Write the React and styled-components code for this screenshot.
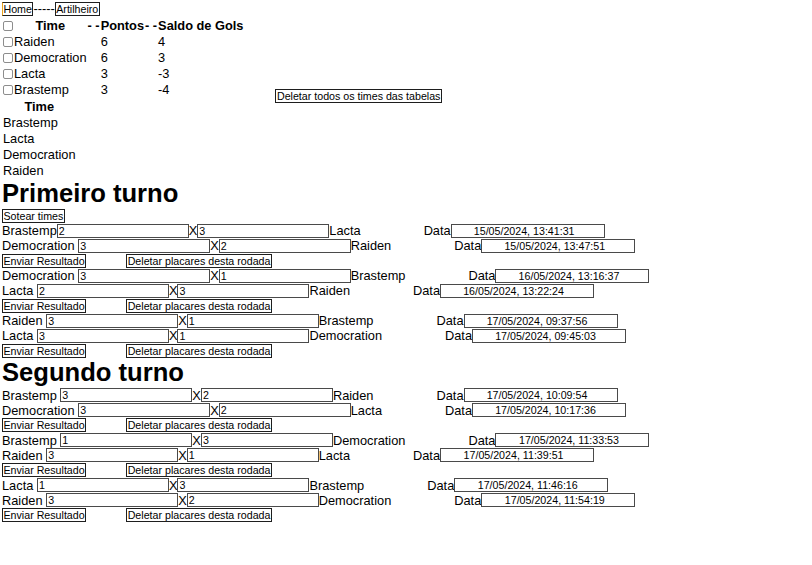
import React from 'react'
import styled, { createGlobalStyle } from 'styled-components'

const GlobalStyle = createGlobalStyle`
  body {
    margin: 0;
    padding: 2px 2px 0 2px;
    background: #fff;
    color: #000;
    font-family: "Liberation Sans", Arial, sans-serif;
    font-size: 12.8px;
  }
`

const standings = [
  { team: 'Raiden', pontos: 6, saldo: 4 },
  { team: 'Democration', pontos: 6, saldo: 3 },
  { team: 'Lacta', pontos: 3, saldo: -3 },
  { team: 'Brastemp', pontos: 3, saldo: -4 },
]

const teams = ['Brastemp', 'Lacta', 'Democration', 'Raiden']

const turnos = [
  {
    title: 'Primeiro turno',
    sortear: true,
    rodadas: [
      [
        { home: 'Brastemp', hs: '2', away: 'Lacta', as: '3', date: '15/05/2024, 13:41:31', tight: true },
        { home: 'Democration', hs: '3', away: 'Raiden', as: '2', date: '15/05/2024, 13:47:51' },
      ],
      [
        { home: 'Democration', hs: '3', away: 'Brastemp', as: '1', date: '16/05/2024, 13:16:37' },
        { home: 'Lacta', hs: '2', away: 'Raiden', as: '3', date: '16/05/2024, 13:22:24' },
      ],
      [
        { home: 'Raiden', hs: '3', away: 'Brastemp', as: '1', date: '17/05/2024, 09:37:56' },
        { home: 'Lacta', hs: '3', away: 'Democration', as: '1', date: '17/05/2024, 09:45:03' },
      ],
    ],
  },
  {
    title: 'Segundo turno',
    sortear: false,
    rodadas: [
      [
        { home: 'Brastemp', hs: '3', away: 'Raiden', as: '2', date: '17/05/2024, 10:09:54' },
        { home: 'Democration', hs: '3', away: 'Lacta', as: '2', date: '17/05/2024, 10:17:36' },
      ],
      [
        { home: 'Brastemp', hs: '1', away: 'Democration', as: '3', date: '17/05/2024, 11:33:53' },
        { home: 'Raiden', hs: '3', away: 'Lacta', as: '1', date: '17/05/2024, 11:39:51' },
      ],
      [
        { home: 'Lacta', hs: '1', away: 'Brastemp', as: '3', date: '17/05/2024, 11:46:16' },
        { home: 'Raiden', hs: '3', away: 'Democration', as: '2', date: '17/05/2024, 11:54:19' },
      ],
    ],
  },
]

const Nav = styled.nav`
  display: flex;
  align-items: center;
  height: 14px;
`

const Button = styled.button`
  height: 14px;
  padding: 0 0.5px;
  margin: 0;
  border: 1px solid #1e1e1e;
  border-left-color: ${(p) => (p.$focused ? '#e9a21c' : '#1e1e1e')};
  background: #fff;
  color: #000;
  font-family: "Liberation Sans", Arial, sans-serif;
  font-size: 10.67px;
  line-height: 12px;
  cursor: pointer;
  margin-left: ${(p) => p.$offset || 0}px;
  margin-bottom: ${(p) => p.$drop || 0}px;
`

const Dashes = styled.span`
  line-height: 14px;
`

const StandingsRow = styled.div`
  display: flex;
  align-items: flex-end;
  gap: 31px;
  margin-top: 2px;
`

const Table = styled.table`
  border-collapse: collapse;
  border-spacing: 0;
  margin-top: ${(p) => p.$top || 0}px;
`

const Th = styled.th`
  padding: ${(p) => (p.$tight ? 0 : '0 1px')};
  height: 16px;
  line-height: 16px;
  font-weight: bold;
  text-align: center;
  white-space: nowrap;
`

const Td = styled.td`
  padding: ${(p) => (p.$tight ? 0 : '0 1px')};
  height: 16px;
  line-height: 16px;
  white-space: nowrap;
  text-align: left;
`

const CheckCell = styled.td`
  padding: 0 0 0 1px;
  height: 16px;
  line-height: 0;
  vertical-align: middle;
`

const Check = styled.input.attrs({ type: 'checkbox' })`
  appearance: none;
  display: block;
  width: 10px;
  height: 10px;
  margin: 0;
  border: 1px solid #8d8d8d;
  border-radius: 2px;
  background: #fff;
`

const Heading = styled.h1`
  margin: 0;
  font-size: 25.6px;
  font-weight: bold;
  line-height: 29.4px;
`

const Line = styled.div`
  display: flex;
  align-items: center;
  height: 15px;
  white-space: nowrap;
`

const Label = styled.span`
  line-height: 15px;
  margin-right: ${(p) => (p.$spaced ? 3.6 : 0)}px;
  margin-left: ${(p) => p.$offset || 0}px;
`

const Field = styled.input`
  box-sizing: border-box;
  width: ${(p) => (p.$wide ? 154 : 132)}px;
  height: 14px;
  margin: 0;
  padding: ${(p) => (p.$wide ? '0 8px 0 1px' : '0 1px')};
  border: 1px solid #4a4a4a;
  background: #fff;
  color: #000;
  font-family: "Liberation Sans", Arial, sans-serif;
  font-size: 10.67px;
  text-align: ${(p) => (p.$wide ? 'center' : 'left')};
  outline: none;
`

function Match({ m }) {
  return (
    <Line>
      <Label $spaced={!m.tight}>{m.home}</Label>
      <Field defaultValue={m.hs} />
      <Label>X</Label>
      <Field defaultValue={m.as} />
      <Label>{m.away}</Label>
      <Label $offset={63}>Data</Label>
      <Field $wide readOnly value={m.date} />
    </Line>
  )
}

export default function App() {
  return (
    <>
      <GlobalStyle />
      <Nav>
        <Button $focused>Home</Button>
        <Dashes>-----</Dashes>
        <Button>Artilheiro</Button>
      </Nav>

      {/* classificação */}
      <StandingsRow>
        <Table>
          <thead>
            <tr>
              <CheckCell>
                <Check />
              </CheckCell>
              <Th>Time</Th>
              <Th $tight>- -</Th>
              <Th>Pontos</Th>
              <Th $tight>- -</Th>
              <Th>Saldo de Gols</Th>
            </tr>
          </thead>
          <tbody>
            {standings.map((s) => (
              <tr key={s.team}>
                <CheckCell>
                  <Check />
                </CheckCell>
                <Td>{s.team}</Td>
                <Td $tight />
                <Td>{s.pontos}</Td>
                <Td $tight />
                <Td>{s.saldo}</Td>
              </tr>
            ))}
          </tbody>
        </Table>
        <Button $drop={-5}>Deletar todos os times das tabelas</Button>
      </StandingsRow>

      {/* times */}
      <Table $top={1}>
        <thead>
          <tr>
            <Th>Time</Th>
          </tr>
        </thead>
        <tbody>
          {teams.map((t) => (
            <tr key={t}>
              <Td>{t}</Td>
            </tr>
          ))}
        </tbody>
      </Table>

      {/* turnos */}
      {turnos.map((turno) => (
        <section key={turno.title}>
          <Heading>{turno.title}</Heading>
          {turno.sortear && (
            <Line>
              <Button>Sotear times</Button>
            </Line>
          )}
          {turno.rodadas.map((rodada, i) => (
            <div key={i}>
              {rodada.map((m) => (
                <Match key={m.home + m.away} m={m} />
              ))}
              <Line>
                <Button>Enviar Resultado</Button>
                <Button $offset={40}>Deletar placares desta rodada</Button>
              </Line>
            </div>
          ))}
        </section>
      ))}
    </>
  )
}
